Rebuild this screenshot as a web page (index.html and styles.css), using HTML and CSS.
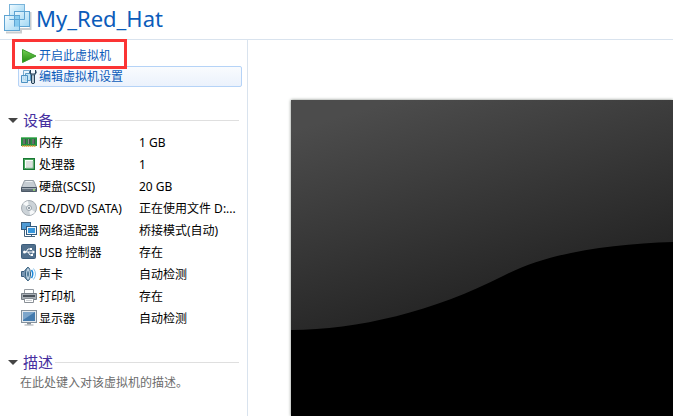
FILE: index.html
```
<!DOCTYPE html>
<html lang="zh-CN">
  <head>
    <meta charset="UTF-8">
    <meta name="viewport" content="width=device-width, initial-scale=1.0">
    <title>My_Red_Hat</title>
    <link rel="stylesheet" href="styles.css">
  </head>
  <body>
    <header>
      <svg class="logo" viewBox="0 0 30 32">
        <defs>
          <linearGradient id="pane" x1="0" y1="0" x2="1" y2="1">
            <stop offset="0" stop-color="#f2fbff"/>
            <stop offset="1" stop-color="#8fd0f2"/>
          </linearGradient>
        </defs>
        <path d="M2 30.500h15V27h9.500V10" fill="none" stroke="#c9cdd0" stroke-width="2"/>
        <rect x="5.500" y="2.500" width="15" height="15" fill="url(#pane)" stroke="#7ab4da"/>
        <rect x="10.500" y="9.500" width="15" height="15" fill="url(#pane)" fill-opacity=".85" stroke="#5da3d2"/>
        <rect x=".5" y="13.500" width="15" height="15" fill="url(#pane)" fill-opacity=".8" stroke="#5da3d2"/>
        <path d="M11 14h4.500v10H11z" fill="#6fc1ec" fill-opacity=".7"/>
        <path d="M10.500 24.500v-15h10v8h-15" fill="none" stroke="#5da3d2"/>
      </svg>
      <h1>My_Red_Hat</h1>
    </header>

    <div class="container">
      <aside>
        <nav>
          <a class="command power" href="#start">
            <svg class="icon" viewBox="0 0 16 16">
              <defs>
                <linearGradient id="play" x1="0" y1="0" x2="0" y2="1">
                  <stop offset="0" stop-color="#75cf54"/>
                  <stop offset="1" stop-color="#248c12"/>
                </linearGradient>
              </defs>
              <path d="M1.500 1.500 15 8 1.500 14.500z" fill="url(#play)" stroke="#3a9d2b"/>
            </svg>
            <span>开启此虚拟机</span>
          </a>
          <a class="command edit" href="#settings">
            <svg class="icon" viewBox="0 0 16 16">
              <path d="M2.500 1.500h6v9h-6z" fill="#e9f6fd" stroke="#79acd0"/>
              <path d="M4.500 4.500h5v7h-5z" fill="#c4e5f6" stroke="#5b9cc8"/>
              <path d="M.5 6.500h6v7h-6z" fill="#c3e4f5" fill-opacity=".8" stroke="#4b91c2"/>
              <path d="M9.500 1q-2 3 1 5v8q1.500 1.500 3 0V6q3-2 1-5v3l-1 1h-3l-1-1z" fill="#8fa3b2" stroke="#28435a"/>
              <path d="M12 7v7" stroke="#e2ebf1"/>
            </svg>
            <span>编辑虚拟机设置</span>
          </a>
        </nav>

        <section>
          <h2>设备</h2>
          <table>
            <tr>
              <th scope="row">
                <svg class="icon" viewBox="0 0 16 16">
                  <path d="M0 3h16v9H0z" fill="#249340"/>
                  <path d="M0 3h16v1H0z" fill="#69bd76"/>
                  <path d="M2 5h3v5H2zM6.500 5h3v5h-3zM11 5h3v5h-3z" fill="#45534b"/>
                  <path d="M3 5v5M7.500 5v5M12 5v5" stroke="#87958b"/>
                  <path d="M1 12h14" stroke="#d99b35" stroke-width="1.500" stroke-dasharray="1.500 .5"/>
                </svg>
                内存
              </th>
              <td>1 GB</td>
            </tr>
            <tr>
              <th scope="row">
                <svg class="icon" viewBox="0 0 16 16">
                  <rect x="2.500" y="2.500" width="11" height="11" fill="#46a45a" stroke="#197833"/>
                  <rect x="4.500" y="4.500" width="7" height="7" fill="#dce0dd" stroke="#f9fff9"/>
                  <path d="M12 5v7H5" fill="none" stroke="#8db596"/>
                </svg>
                处理器
              </th>
              <td>1</td>
            </tr>
            <tr>
              <th scope="row">
                <svg class="icon" viewBox="0 0 16 16">
                  <path d="M3.500 2.500h9l3 7H.5z" fill="#c6cdd3" stroke="#969ea6"/>
                  <path d="M4.500 3.500h7" stroke="#edf1f3"/>
                  <path d="M.5 9.500h15v4H.5z" fill="#64717e" stroke="#4c5967"/>
                  <path d="M1 10.500h14" stroke="#a3adb6"/>
                  <path d="M12 12h2" stroke="#9be66c" stroke-width="1.500"/>
                </svg>
                硬盘(SCSI)
              </th>
              <td>20 GB</td>
            </tr>
            <tr>
              <th scope="row">
                <svg class="icon" viewBox="0 0 16 16">
                  <circle cx="8" cy="8" r="7.500" fill="#ccd3d8" stroke="#a5acb2"/>
                  <path d="M8 8 2 4A7 7 0 0 1 7 1zM8 8l6 4a7 7 0 0 1-5 3z" fill="#f6f8f9"/>
                  <circle cx="8" cy="8" r="2.500" fill="#f3f5f6" stroke="#98a3ac"/>
                  <circle cx="8" cy="8" r="1" fill="#74828e"/>
                </svg>
                CD/DVD (SATA)
              </th>
              <td>正在使用文件 D:...</td>
            </tr>
            <tr>
              <th scope="row">
                <svg class="icon" viewBox="0 0 16 16">
                  <rect x=".5" y=".5" width="9" height="7" fill="#4f9bd5" stroke="#355b7c"/>
                  <path d="M3.500 8v6.500H7" fill="none" stroke="#42617c"/>
                  <rect x="5.500" y="4.500" width="10" height="8" fill="#edf5fa" stroke="#315b80"/>
                  <path d="M7 6h7v5H7z" fill="#3796db"/>
                  <path d="M10.500 13v2M7 14.500h7" stroke="#45647d"/>
                </svg>
                网络适配器
              </th>
              <td>桥接模式(自动)</td>
            </tr>
            <tr>
              <th scope="row">
                <svg class="icon" viewBox="0 0 16 16">
                  <rect x=".5" y=".5" width="14" height="14" rx="1" fill="#506f8c" stroke="#3b5c7b"/>
                  <path d="M3 8h10M5 8l2-3h2M7 8l2 3h2" fill="none" stroke="#fff"/>
                  <circle cx="3.500" cy="8" r="1.500" fill="#fff"/>
                  <path d="M9 4h2v2H9zM10 10h2v2h-2zM11.500 6l2.500 2-2.500 2z" fill="#fff"/>
                </svg>
                USB 控制器
              </th>
              <td>存在</td>
            </tr>
            <tr>
              <th scope="row">
                <svg class="icon" viewBox="0 0 16 16">
                  <path d="M.5 5.500h2.500l4-4.500v14l-4-4.500H.5z" fill="#7896b2" stroke="#3a5d7e"/>
                  <ellipse cx="7" cy="8" rx="2.500" ry="6.500" fill="#bad0e1" stroke="#38617f"/>
                  <ellipse cx="7" cy="8" rx="1" ry="3" fill="#4d7796"/>
                  <path d="M10.500 4q2.500 4 0 8" fill="none" stroke="#1888dc" stroke-width="1.500"/>
                  <path d="M12.500 2.500q4 5.500 0 11" fill="none" stroke="#8ac3ea"/>
                </svg>
                声卡
              </th>
              <td>自动检测</td>
            </tr>
            <tr>
              <th scope="row">
                <svg class="icon" viewBox="0 0 16 16">
                  <path d="M3.500 6V1.500h9V6" fill="#fff" stroke="#969ba1"/>
                  <path d="M.5 5.500h15v6H.5z" fill="#a8aeb4" stroke="#757c84"/>
                  <path d="M2 8h12" stroke="#4b525a" stroke-width="2"/>
                  <path d="M3.500 10.500h9v4h-9z" fill="#fff" stroke="#8a9096"/>
                  <path d="M5 12.500h6" stroke="#ccd0d4"/>
                </svg>
                打印机
              </th>
              <td>存在</td>
            </tr>
            <tr>
              <th scope="row">
                <svg class="icon" viewBox="0 0 16 16">
                  <rect x=".5" y=".5" width="15" height="12" fill="#e2e8ed" stroke="#84919c"/>
                  <path d="M2 2h12v9H2z" fill="#447bae"/>
                  <path d="M2 2h12L2 10z" fill="#7ca5ca"/>
                  <path d="M6 13h4v1.500H6z" fill="#879099"/>
                  <path d="M3.500 15h9" stroke="#a1a8ae"/>
                </svg>
                显示器
              </th>
              <td>自动检测</td>
            </tr>
          </table>
        </section>

        <section>
          <h2>描述</h2>
          <p>在此处键入对该虚拟机的描述。</p>
        </section>
      </aside>

      <main>
        <svg class="screen" viewBox="0 0 382 316" preserveAspectRatio="xMinYMin slice">
          <defs>
            <linearGradient id="glass" gradientUnits="userSpaceOnUse" x1="30" y1="22" x2="92" y2="230">
              <stop offset="0" stop-color="#4c4c4c"/>
              <stop offset="1" stop-color="#252525"/>
            </linearGradient>
          </defs>
          <path d="M0 0h382v316H0z"/>
          <path d="M0 0h382v142C320 144 258 152 212 176C144 211 66 230 0 230z" fill="url(#glass)"/>
        </svg>
      </main>
    </div>
  </body>
</html>
```

FILE: styles.css
```
:root {
  --line: #d9e3ee;
  --link: #0b5cba;
  --heading: #4630a0;
  --highlight: #fb3434;
}

*, ::before, ::after {
  box-sizing: border-box;
}

body {
  margin: 0;
  min-height: 100vh;
  display: flex;
  flex-direction: column;
  background: #fff;
  color: #000;
  font: 12px/22px "Noto Sans", "Noto Sans CJK SC", sans-serif;
}

header {
  height: 40px;
  padding: 0 4px 4px;
  display: flex;
  align-items: center;
  gap: 2px;
  border-bottom: 1px solid var(--line);
}

.logo {
  width: 30px;
  height: 32px;
}

h1 {
  margin: 0;
  color: var(--link);
  font-size: 22px;
  font-weight: normal;
  line-height: 32px;
}

.container {
  flex: 1;
  display: flex;
}

aside {
  width: 248px;
  flex: none;
  border-right: 1px solid var(--line);
}

.icon {
  width: 16px;
  height: 16px;
  flex: none;
}

nav {
  padding: 5px 5px 0 18px;
}

.command {
  height: 21px;
  padding: 0 2px;
  display: flex;
  align-items: center;
  gap: 2px;
  position: relative;
  border: 1px solid transparent;
  color: var(--link);
  text-decoration: none;
}

.edit {
  border-color: #b5d3f7;
  border-radius: 2px;
  background: linear-gradient(#f9fbfe, #ebf2fc);
}

/* red frame drawn over the power command */
.power::after {
  content: "";
  position: absolute;
  z-index: 1;
  top: -7px;
  left: -7px;
  width: 115px;
  height: 30px;
  border: 3px solid var(--highlight);
}

section {
  margin-top: 22px;
  padding: 0 8px;
}

section + section {
  margin-top: 21px;
}

h2 {
  margin: 0;
  display: flex;
  align-items: center;
  color: var(--heading);
  font-size: 15px;
  font-weight: normal;
  line-height: 22px;
}

h2::before {
  content: "";
  margin-right: 5px;
  border: solid transparent;
  border-width: 5px 5px 0;
  border-top-color: #444;
}

h2::after {
  content: "";
  flex: 1;
  height: 1px;
  margin-left: 2px;
  background: #dfdfdf;
}

table {
  width: 100%;
  margin-top: 1px;
  border-collapse: collapse;
  table-layout: fixed;
}

th, td {
  height: 22px;
  padding: 0;
  text-align: left;
  font-weight: normal;
  white-space: nowrap;
}

th {
  width: 131px;
  padding-left: 13px;
}

th .icon {
  margin-right: -1px;
  vertical-align: -3px;
}

section p {
  margin: 0 12px;
  line-height: 20px;
  color: #6d6d6d;
}

main {
  flex: 1;
  min-width: 0;
  padding: 60px 0 0 43px;
  display: flex;
}

.screen {
  width: 100%;
  box-shadow: 0 0 3px #7b857b;
}
```
